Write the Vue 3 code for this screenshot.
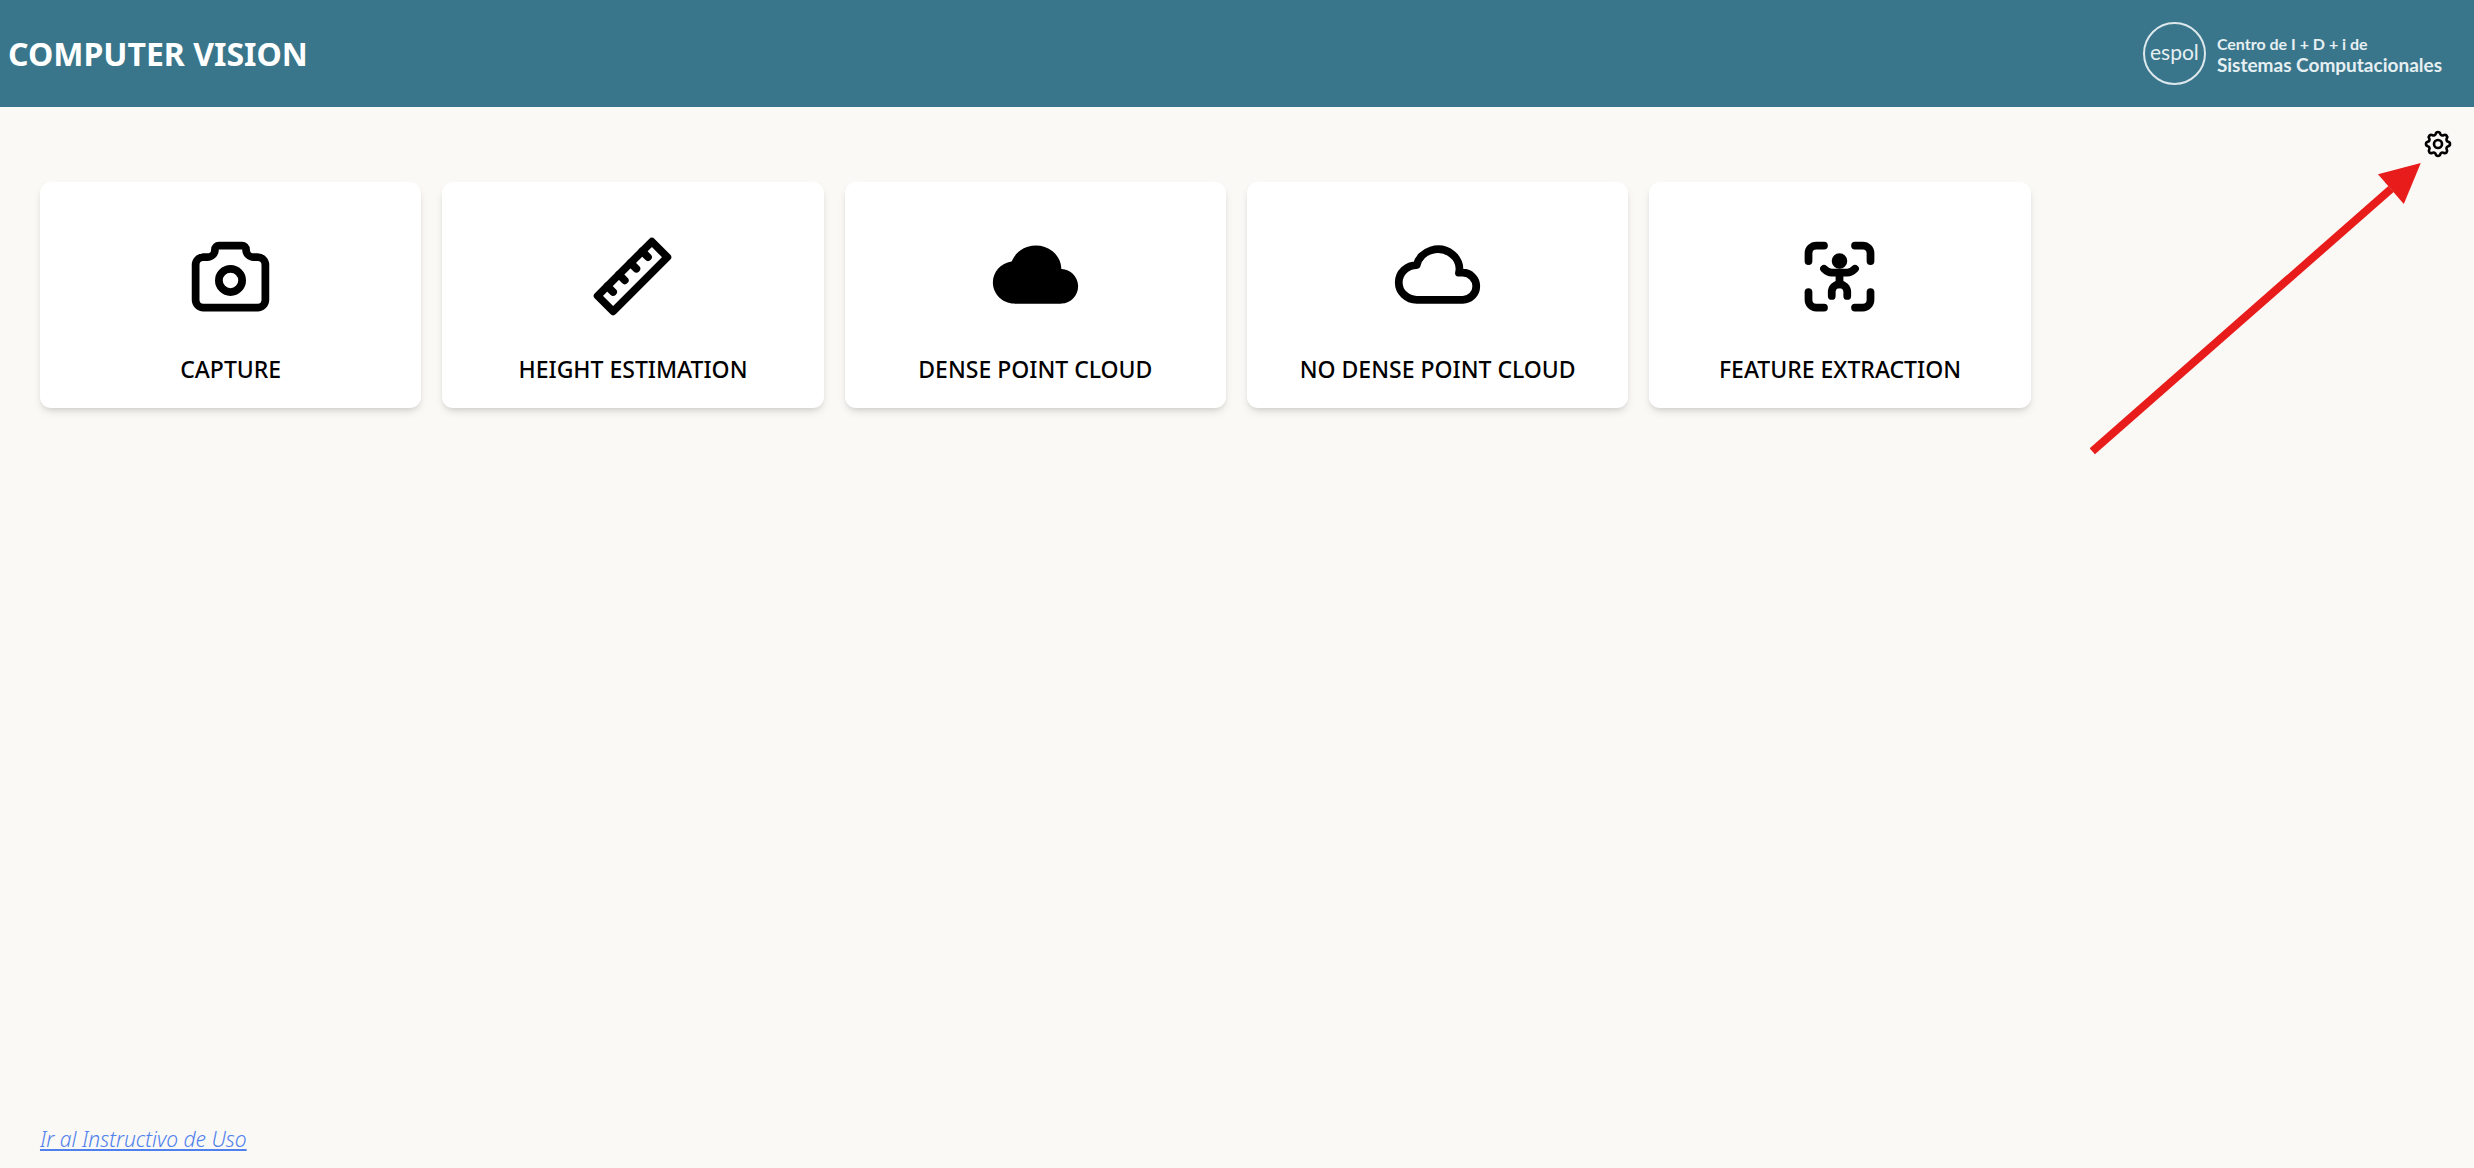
<script setup>
const cards = [
  {
    label: 'CAPTURE',
    paths: [
      'M5 7h1a2 2 0 0 0 2-2a1 1 0 0 1 1-1h6a1 1 0 0 1 1 1a2 2 0 0 0 2 2h1a2 2 0 0 1 2 2v9a2 2 0 0 1-2 2H5a2 2 0 0 1-2-2V9a2 2 0 0 1 2-2',
      'M9 13a3 3 0 1 0 6 0a3 3 0 0 0-6 0',
    ],
  },
  {
    label: 'HEIGHT ESTIMATION',
    paths: ['M17 3l4 4L7 21l-4-4z', 'M16 7l-1.5-1.5', 'M13 10l-1.5-1.5', 'M10 13l-1.5-1.5', 'M7 16l-1.5-1.5'],
  },
  {
    label: 'DENSE POINT CLOUD',
    filled: true,
    paths: [
      'M10.04 4.305c2.195-.667 4.615-.224 6.36 1.176c1.386 1.108 2.188 2.686 2.252 4.34l.003.212l.091.003c2.3.107 4.143 1.961 4.25 4.27l.004.211c0 2.407-1.885 4.372-4.255 4.482l-.21.005H6.657l-.222-.008c-2.94-.11-5.317-2.399-5.43-5.263L1 13.517C1 10.77 3.08 8.507 5.784 8.1l.114-.016l.07-.181c.663-1.62 2.056-2.906 3.829-3.518z',
    ],
  },
  {
    label: 'NO DENSE POINT CLOUD',
    paths: [
      'M6.657 18C4.085 18 2 15.993 2 13.517c0-2.475 2.085-4.482 4.657-4.482c.393-1.762 1.794-3.2 3.675-3.773c1.88-.572 3.956-.193 5.444 1c1.488 1.19 2.162 3.007 1.77 4.769h.99c1.913 0 3.464 1.56 3.464 3.486c0 1.927-1.551 3.487-3.465 3.487H6.657',
    ],
  },
  {
    label: 'FEATURE EXTRACTION',
    paths: [
      'M4 8V6a2 2 0 0 1 2-2h2',
      'M4 16v2a2 2 0 0 0 2 2h2',
      'M16 4h2a2 2 0 0 1 2 2v2',
      'M16 20h2a2 2 0 0 0 2-2v-2',
      'M11 8a1 1 0 1 0 2 0a1 1 0 1 0-2 0',
      'M10 17v-1a2 2 0 1 1 4 0v1',
      'M8 10c.666.666 1.334 1 2 1h4c.666 0 1.334-.334 2-1',
      'M12 11v3',
    ],
  },
]
</script>

<template>
  <div class="page">
    <header class="topbar">
      <h1 class="title">COMPUTER VISION</h1>
      <div class="brand">
        <span class="brand-mark">espol</span>
        <p class="brand-name">
          <span class="brand-line">Centro de I + D + i de</span>
          <strong class="brand-line strong">Sistemas Computacionales</strong>
        </p>
      </div>
    </header>

    <main class="content">
      <div class="toolbar">
        <button class="settings" type="button" aria-label="Settings">
          <svg class="icon settings-icon" viewBox="0 0 24 24" aria-hidden="true">
            <path d="M10.325 4.317c.426-1.756 2.924-1.756 3.35 0a1.724 1.724 0 0 0 2.573 1.066c1.543-.94 3.31.826 2.37 2.37a1.724 1.724 0 0 0 1.065 2.572c1.756.426 1.756 2.924 0 3.35a1.724 1.724 0 0 0-1.066 2.573c.94 1.543-.826 3.31-2.37 2.37a1.724 1.724 0 0 0-2.572 1.065c-.426 1.756-2.924 1.756-3.35 0a1.724 1.724 0 0 0-2.573-1.066c-1.543.94-3.31-.826-2.37-2.37a1.724 1.724 0 0 0-1.065-2.572c-1.756-.426-1.756-2.924 0-3.35a1.724 1.724 0 0 0 1.066-2.573c-.94-1.543.826-3.31 2.37-2.37c1 .608 2.296.07 2.572-1.065z" />
            <circle cx="12" cy="12" r="3" />
          </svg>
        </button>
      </div>

      <nav class="cards">
        <button v-for="card in cards" :key="card.label" class="card" type="button">
          <svg class="icon card-icon" :class="{ filled: card.filled }" viewBox="0 0 24 24" aria-hidden="true">
            <path v-for="d in card.paths" :key="d" :d="d" />
          </svg>
          <span class="card-label">{{ card.label }}</span>
        </button>
      </nav>

      <svg class="pointer" viewBox="0 0 332 296" aria-hidden="true">
        <path class="pointer-shaft" d="M2.3 291.3L301 29" />
        <path class="pointer-head" d="M330.8 3L288 14.3L313.8 44z" />
      </svg>
    </main>

    <footer class="footer">
      <a class="guide" href="#">Ir al Instructivo de Uso</a>
    </footer>
  </div>
</template>

<style>
body {
  margin: 0;
  background: #faf9f5;
}
</style>

<style scoped>
.page {
  display: flex;
  flex-direction: column;
  min-height: 100vh;
  background: #faf9f5;
  color: #000;
  font-family: "Noto Sans", "Open Sans", sans-serif;
}

.topbar {
  display: flex;
  align-items: center;
  justify-content: space-between;
  box-sizing: border-box;
  min-height: 107px;
  padding: 0 32px 0 8px;
  background: #39768b;
  color: #fff;
}

.title {
  margin: 0;
  font-size: 32px;
  line-height: 44px;
  font-weight: 700;
}

.brand {
  display: flex;
  align-items: center;
  gap: 11px;
  color: #e6eff2;
  font-family: Lato, sans-serif;
}

.brand-mark {
  display: flex;
  align-items: center;
  justify-content: center;
  box-sizing: border-box;
  width: 63px;
  height: 63px;
  padding-bottom: 4px;
  border: 2px solid #dde8ec;
  border-radius: 50%;
  font-size: 21px;
  line-height: 24px;
}

.brand-name {
  margin: 0;
}

.brand-line {
  display: block;
  font-size: 16px;
  line-height: 21px;
  font-weight: 700;
}

.brand-line.strong {
  font-size: 19px;
}

.content {
  position: relative;
  flex: 1;
}

.toolbar {
  display: flex;
  justify-content: flex-end;
  padding: 21px 20px 22px;
}

.settings {
  display: flex;
  padding: 0;
  border: 0;
  background: none;
  color: inherit;
  cursor: pointer;
}

.icon {
  fill: none;
  stroke: currentColor;
  stroke-width: 2;
  stroke-linecap: round;
  stroke-linejoin: round;
}

.icon.filled {
  fill: currentColor;
  stroke: none;
}

.settings-icon {
  width: 32px;
  height: 32px;
}

.cards {
  display: grid;
  grid-template-columns: repeat(auto-fill, minmax(360px, 1fr));
  gap: 21px;
  padding: 0 41px 0 40px;
}

.card {
  display: flex;
  flex-direction: column;
  align-items: center;
  gap: 28px;
  padding: 48px 16px 21px;
  border: 0;
  border-radius: 11px;
  background: #fff;
  box-shadow: 0 5px 8px -1px rgba(0, 0, 0, 0.1), 0 3px 5px -2px rgba(0, 0, 0, 0.1);
  color: inherit;
  font-family: inherit;
  cursor: pointer;
}

.card-icon {
  width: 93px;
  height: 93px;
}

.card-label {
  font-size: 23px;
  line-height: 36px;
  font-weight: 500;
}

.pointer {
  position: absolute;
  top: 53px;
  right: 52px;
  width: 332px;
  height: 296px;
  pointer-events: none;
}

.pointer-shaft {
  fill: none;
  stroke: #e71c1b;
  stroke-width: 8;
}

.pointer-head {
  fill: #e71c1b;
}

.footer {
  padding: 0 40px 13px;
}

.guide {
  color: #4f80ee;
  font-size: 21px;
  line-height: 32px;
  font-style: italic;
  font-weight: 300;
  text-decoration-thickness: 2px;
  text-underline-offset: 2px;
}
</style>
